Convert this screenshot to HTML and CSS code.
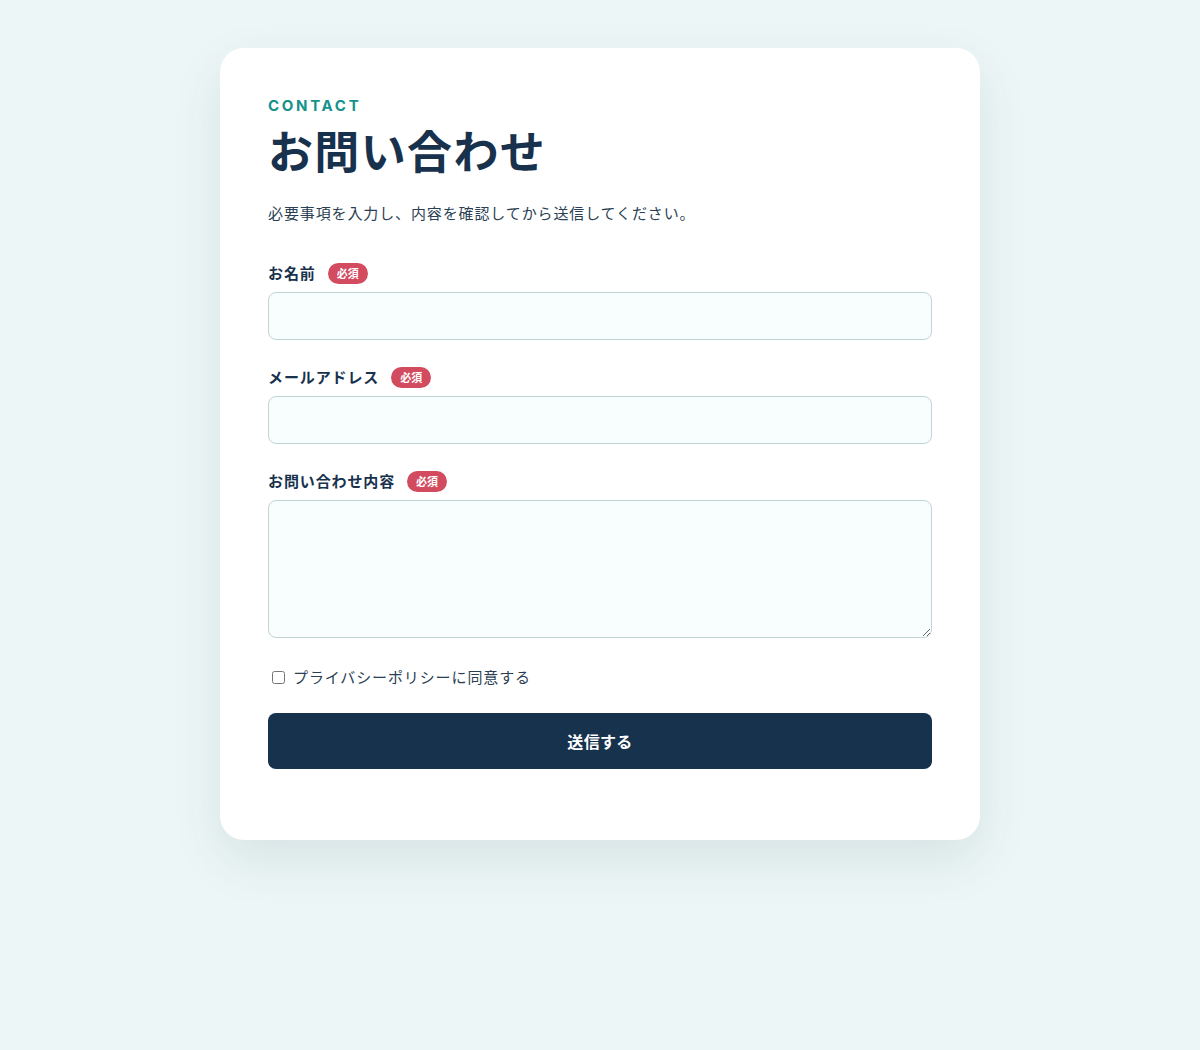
FILE: index.html
```html
<!DOCTYPE html>
<html lang="ja">
<head>
<meta charset="utf-8">
<title>お問い合わせ</title>
<link rel="stylesheet" href="styles.css">
</head>
<body>
<main class="page">
  <section class="card">
    <p class="eyebrow">CONTACT</p>
    <h1 class="title">お問い合わせ</h1>
    <p class="lead">必要事項を入力し、内容を確認してから送信してください。</p>
    <form class="form">
      <div class="field">
        <label class="label" for="name">お名前<span class="badge">必須</span></label>
        <input class="input" id="name" type="text">
      </div>
      <div class="field">
        <label class="label" for="email">メールアドレス<span class="badge">必須</span></label>
        <input class="input" id="email" type="email">
      </div>
      <div class="field">
        <label class="label" for="msg">お問い合わせ内容<span class="badge">必須</span></label>
        <textarea class="textarea" id="msg"></textarea>
      </div>
      <label class="agree"><input class="check" type="checkbox">プライバシーポリシーに同意する</label>
      <button class="submit" type="button">送信する</button>
    </form>
  </section>
</main>
</body>
</html>
```
FILE: styles.css
```css
* { box-sizing: border-box; }
html, body { margin: 0; padding: 0; }
body {
  background: #edf6f6;
  font-family: "Noto Sans CJK JP", Inter, "Noto Sans", sans-serif;
  color: #18324d;
  letter-spacing: 0.055em;
}
.page {
  display: flex;
  justify-content: center;
  padding-top: 48px;
  min-height: 1050px;
}
.card {
  width: 760px;
  background: #ffffff;
  border-radius: 24px;
  padding: 48px 48px 71px;
  box-shadow: 0 20px 50px rgba(24, 70, 80, 0.10);
  align-self: flex-start;
}
.eyebrow {
  margin: 0;
  font-family: Inter, "Noto Sans", sans-serif;
  font-size: 15px;
  line-height: 20px;
  font-weight: 700;
  letter-spacing: 0.18em;
  color: #15928c;
}
.title {
  margin: 5px 0 0;
  font-size: 45px;
  line-height: 57px;
  font-weight: 700;
  letter-spacing: 0.03em;
  color: #18324d;
}
.lead {
  margin: 23px 0 0;
  font-size: 15px;
  line-height: 24px;
  color: #2a3f53;
}
.form {
  margin-top: 37px;
  display: flex;
  flex-direction: column;
}
.field {
  display: flex;
  flex-direction: column;
  gap: 8px;
  margin-bottom: 26px;
}
.label {
  display: flex;
  align-items: center;
  height: 22px;
  font-size: 15px;
  line-height: 22px;
  font-weight: 700;
  color: #18324d;
}
.badge {
  display: inline-flex;
  align-items: center;
  justify-content: center;
  margin-left: 12px;
  height: 21px;
  padding: 0 9px;
  border-radius: 11px;
  background: #d24b5f;
  color: #ffffff;
  font-size: 11px;
  line-height: 21px;
  font-weight: 700;
  letter-spacing: 0;
}
.input, .textarea {
  width: 100%;
  border: 1px solid #c3d4d7;
  border-radius: 8px;
  background: #f8fdfd;
  font: inherit;
  font-size: 15px;
  padding: 12px 14px;
}
.input { height: 48px; }
.textarea { height: 138px; resize: vertical; display: block; }
.agree {
  display: flex;
  align-items: center;
  height: 22px;
  line-height: 22px;
  margin-top: 2px;
  font-size: 15px;
  color: #2a3f53;
}
.check {
  width: 13px;
  height: 13px;
  margin: 0 8px 0 4px;
}
.submit {
  margin-top: 25px;
  height: 56px;
  width: 100%;
  border: 0;
  border-radius: 8px;
  background: #17324d;
  color: #ffffff;
  font: inherit;
  font-size: 16px;
  font-weight: 700;
  letter-spacing: 0.02em;
}
```
